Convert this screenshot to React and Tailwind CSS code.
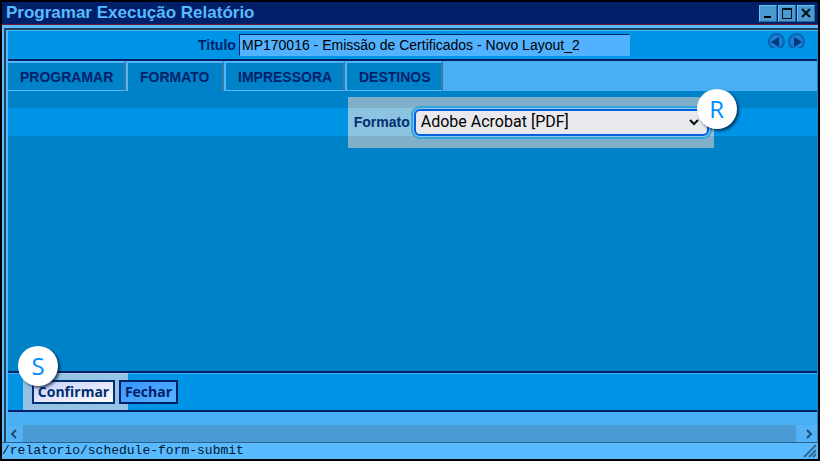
import React from 'react';

const tabs = ['PROGRAMAR', 'FORMATO', 'IMPRESSORA', 'DESTINOS'];

const tabWidths = {
  PROGRAMAR: 'w-[118px]',
  FORMATO: 'w-[98px]',
  IMPRESSORA: 'w-[121px]',
  DESTINOS: 'w-[98px]',
};

const WindowButton = ({ label, children }) => (
  <button
    type="button"
    aria-label={label}
    className="flex h-[17px] w-[18px] items-center justify-center border border-t-[#63c3ff] border-l-[#63c3ff] border-r-[#2a6796] border-b-[#2a6796] bg-[#4a9ad1]"
  >
    <svg width="16" height="15" viewBox="0 0 16 15" fill="none" shapeRendering="crispEdges">
      {children}
    </svg>
  </button>
);

const NavArrow = ({ label, flip = false }) => (
  <button type="button" aria-label={label} className="h-[15px] w-[17px]">
    <svg
      width="17"
      height="15"
      viewBox="0 0 17 15"
      className={flip ? '-scale-x-100' : ''}
    >
      <circle cx="8.5" cy="8.5" r="7.5" fill="#1a7fd8" stroke="#0a63ad" strokeWidth="2" />
      <path d="M3 9L11 4V14Z" fill="#033a78" />
    </svg>
  </button>
);

const Marker = ({ letter, className }) => (
  <span
    className={`absolute flex h-10 w-10 items-center justify-center rounded-full bg-white font-['Open_Sans',sans-serif] text-2xl leading-none text-[#008cff] shadow-[2px_2px_3px_rgba(0,20,50,0.7)] ${className}`}
  >
    {letter}
  </span>
);

const TitleBar = () => (
  <header className="flex h-[23px] items-center justify-between border-b border-[#7b1829] bg-[#002169] pl-1 pr-[3px]">
    <h1 className="text-[17px] leading-5 font-bold text-[#5abaff]">Programar Execução Relatório</h1>
    <div className="flex gap-px">
      <WindowButton label="Minimizar">
        <path d="M4 10H11V12H4Z" fill="#000" />
      </WindowButton>
      <WindowButton label="Maximizar">
        <path d="M3.5 2.5H12.5V12.5H3.5Z" stroke="#001018" />
        <path d="M3 3H13" stroke="#001018" strokeWidth="2" />
      </WindowButton>
      <WindowButton label="Fechar janela">
        <path d="M4 3L12 11M12 3L4 11" stroke="#001018" strokeWidth="2" shapeRendering="auto" />
      </WindowButton>
    </div>
  </header>
);

const Tabs = () => (
  <nav className="flex h-[30px] bg-[#4aaef3]" role="tablist">
    {tabs.map((tab) => (
      <button
        key={tab}
        type="button"
        role="tab"
        aria-selected={tab === 'FORMATO'}
        className={`border-t-2 border-t-[#52b5f7] border-r-2 border-r-[#397ba5] bg-[#0082c9] pl-3 text-left text-sm font-bold text-[#002169] ${tabWidths[tab]} ${
          tab === 'FORMATO' ? '' : 'border-b border-b-[#5abaff]'
        } ${tab === 'PROGRAMAR' ? '' : 'border-l-2 border-l-[#52b5f7]'}`}
      >
        {tab}
      </button>
    ))}
  </nav>
);

const FormatPanel = () => (
  <section className="flex-1 bg-[#0082c9] pt-[17px]">
    <div className="flex h-7 items-center bg-[#0094e6] pl-[42%]">
      <div className="-my-3 flex h-[51px] w-[366px] items-center bg-[rgba(240,216,200,0.53)]">
        <div className="flex h-7 w-full items-center bg-[rgba(180,230,255,0.25)] pl-1.5">
          <label htmlFor="formato" className="w-[60px] text-sm font-bold text-[#00306e]">
            Formato
          </label>
          <div className="relative">
            <select
              id="formato"
              className="block h-[27px] w-[295px] appearance-none rounded-md border-2 border-[#0060df] bg-[#e9e9ed] pl-[5px] font-[Roboto,sans-serif] text-base leading-5 text-black shadow-[0_0_0_1px_#8cc8ee,0_0_0_3px_#35a5da]"
            >
              <option>Adobe Acrobat [PDF]</option>
            </select>
            <svg width="10" height="7" viewBox="0 0 10 7" className="pointer-events-none absolute top-2.5 right-2.5" fill="none">
              <path d="M1 1L5 5L9 1" stroke="#000b18" strokeWidth="2" />
            </svg>
            <Marker letter="R" className="-top-5 -right-7" />
          </div>
        </div>
      </div>
    </div>
  </section>
);

const Actions = () => (
  <footer className="flex h-[41px] items-center border-t-2 border-b-2 border-[#002169] bg-[#0094e6] shadow-[inset_0_1px_0_#42adf5]">
    <div className="relative ml-[15px] flex h-full w-[105px] items-center bg-[rgba(255,230,230,0.58)] pl-[9px]">
      <button
        type="button"
        className="h-6 w-[83px] border-2 border-[#00306e] bg-linear-to-br from-[#c6ccff] to-white font-['Open_Sans',sans-serif] text-sm leading-5 font-bold text-[#00306e]"
      >
        Confirmar
      </button>
      <Marker letter="S" className="-top-[27px] -left-[5px]" />
    </div>
    <button
      type="button"
      className="relative -ml-[9px] h-6 w-[59px] border-2 border-[#002169] bg-linear-to-br from-[#3794ff] to-[#58b4ff] font-['Open_Sans',sans-serif] text-sm leading-5 font-bold text-[#002169]"
    >
      Fechar
    </button>
  </footer>
);

const ScrollBar = () => (
  <div className="flex h-[17px] justify-between bg-[#4a9ad3]">
    <button type="button" aria-label="Rolar para a esquerda" className="flex w-[15px] items-center justify-start bg-[#52b2f5] pl-0.5">
      <svg width="8" height="10" viewBox="0 0 8 10" fill="none">
        <path d="M6 1L2 5L6 9" stroke="#1d4e73" strokeWidth="2" />
      </svg>
    </button>
    <button type="button" aria-label="Rolar para a direita" className="flex w-[21px] items-center justify-center bg-[#52b2f5] pl-1">
      <svg width="8" height="10" viewBox="0 0 8 10" fill="none">
        <path d="M2 1L6 5L2 9" stroke="#1d4e73" strokeWidth="2" />
      </svg>
    </button>
  </div>
);

const App = () => (
  <div className="flex min-h-screen flex-col border-2 border-black bg-[#5abaff] font-['Liberation_Sans',Arial,sans-serif]">
    <TitleBar />
    <main className="mt-[3px] ml-0.5 flex flex-1 flex-col border-t-2 border-l-2 border-[#1c4562]">
      <div className="flex flex-1 flex-col border-t border-r border-l-2 border-t-[#52b5f7] border-r-[#2185ce] border-l-[#52b5f7] bg-[#4aaef3]">
        <div className="flex h-[30px] items-center border-b-2 border-[#002169] bg-[#0094e6] pl-[190px]">
          <label htmlFor="titulo" className="w-[41px] text-sm font-bold text-[#002169]">
            Titulo
          </label>
          <input
            id="titulo"
            defaultValue="MP170016 - Emissão de Certificados - Novo Layout_2"
            className="h-[22px] w-[391px] border border-t-[#002169] border-l-[#002169] border-r-[#52b5f7] border-b-[#52b5f7] bg-[#52b2ff] px-0.5 text-sm text-black outline-none"
          />
          <div className="mr-3 mb-[9px] ml-auto flex gap-[3px]">
            <NavArrow label="Anterior" />
            <NavArrow label="Próximo" flip />
          </div>
        </div>
        <Tabs />
        <FormatPanel />
        <Actions />
        <div className="h-[13px]" />
        <ScrollBar />
      </div>
    </main>
    <div className="flex h-[17px] items-center justify-between border-t border-[#29638c] bg-[#5abaff] font-['Liberation_Mono',monospace] text-[13px] leading-4 text-[#001830]">
      <span>/relatorio/schedule-form-submit</span>
      <svg width="14" height="14" viewBox="0 0 14 14" className="mr-px">
        <path d="M1 13L13 1M6 13L13 6M10 13L13 10" stroke="#2b6b98" strokeWidth="2" />
      </svg>
    </div>
  </div>
);

export default App;
